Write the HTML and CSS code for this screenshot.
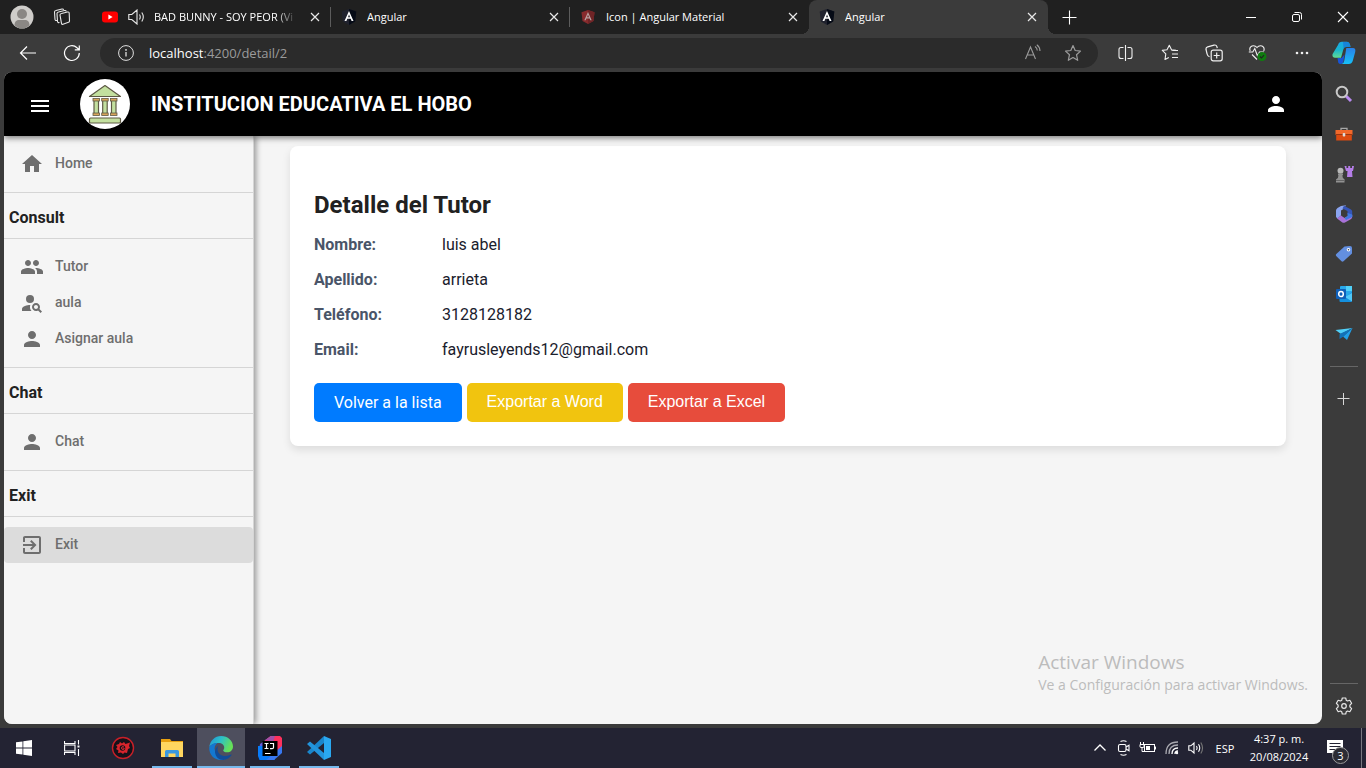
FILE: index.html
```html
<!DOCTYPE html>
<html lang="es">
<head>
<meta charset="utf-8">
<title>Angular</title>
<link rel="stylesheet" href="styles.css">
</head>
<body>
<svg class="defs" aria-hidden="true">
  <symbol id="close" viewBox="0 0 16 16"><path d="M4 4l8 8M12 4l-8 8" fill="none" stroke="#e8e8e8" stroke-width="1.2"/></symbol>
  <symbol id="angular" viewBox="0 0 16 16"><path d="M8 0l7.3 2.6-1.1 10L8 16l-6.200-3.400L.7 2.600z" fill="#20222e"/><path d="M8 0l7.300 2.600-1.100 10L8 16z" fill="#060b16"/><path d="M3.500 12L8 2l4.500 10h-1.900l-.9-2.200H6.300L5.400 12zM7 8.200h2L8 5.600z" fill="#fff"/></symbol>
  <symbol id="person" viewBox="0 0 24 24"><path d="M12 12c2.210 0 4-1.790 4-4s-1.790-4-4-4-4 1.790-4 4 1.790 4 4 4zm0 2c-2.670 0-8 1.340-8 4v2h16v-2c0-2.660-5.330-4-8-4z" fill="currentColor"/></symbol>
</svg>

<header class="tabstrip">
  <div class="profile">
    <button class="icon-btn" aria-label="Perfil"><svg width="24" height="24" viewBox="0 0 24 24"><circle cx="12" cy="12" r="11.500" fill="#cfcdca"/><circle cx="12" cy="9" r="5" fill="#8a8784"/><path d="M4.500 20.500c0-4 2-5.500 4.500-5.500h6c2.500 0 4.500 1.500 4.500 5.500A11 11 0 0 1 4.500 20.500z" fill="#8a8784"/></svg></button>
    <button class="icon-btn" aria-label="Espacios de trabajo"><svg width="18" height="18" viewBox="0 0 18 18" fill="none" stroke="#e8e8e8" stroke-width="1.100"><path d="M8.500 5.500l6-1.500q1.500-.3 1.700 1l.3 8q0 1-1 1.300l-5.500 2q-1.300.4-1.500-1L7 7q0-1.200 1.500-1.500z"/><path d="M6.500 14.500q-1.800.4-2-1L4 5.500q0-1.200 1.500-1.500l6-1.500q1.500-.3 1.800 1M4 12.500q-1.800.3-2-1L1.500 4q0-1.200 1.500-1.500l6-1.500q1.300-.3 1.600.8"/></svg></button>
  </div>
  <nav class="tabs" aria-label="Pestañas">
    <div class="tab">
      <svg width="16" height="16" viewBox="0 0 16 16"><rect x="0" y="2.500" width="16" height="11" rx="3" fill="#f00"/><path d="M6.400 5.600v4.800L10.600 8z" fill="#fff"/></svg>
      <svg class="speaker" width="17" height="16" viewBox="0 0 17 16" fill="none" stroke="#e8e8e8" stroke-width="1.100"><path d="M.8 5.500h3L9 1v14l-5.200-4.500h-3zM11.500 5.500q1.500 2.500 0 5M13.800 3.500q3 4.500 0 9"/></svg>
      <span class="tab-title fade">BAD BUNNY - SOY PEOR (Vi</span>
      <button class="tab-close" aria-label="Cerrar"><svg width="16" height="16"><use href="#close"/></svg></button>
    </div>
    <div class="tab">
      <svg width="16" height="16"><use href="#angular"/></svg>
      <span class="tab-title">Angular</span>
      <button class="tab-close" aria-label="Cerrar"><svg width="16" height="16"><use href="#close"/></svg></button>
    </div>
    <div class="tab no-line">
      <svg width="16" height="16" viewBox="0 0 16 16"><path d="M8 1l6.500 2.300-1 8.700L8 15l-5.500-3-1-8.700z" fill="#872b2d"/><path d="M8 1l6.500 2.300-1 8.700L8 15z" fill="#6f2426"/><path d="M4.300 11.200L8 3l3.700 8.200h-1.400l-.7-1.700H6.400l-.7 1.700zM7 8.200h2L8 5.800z" fill="#b8a0a0"/></svg>
      <span class="tab-title">Icon | Angular Material</span>
      <button class="tab-close" aria-label="Cerrar"><svg width="16" height="16"><use href="#close"/></svg></button>
    </div>
    <div class="tab active">
      <svg width="16" height="16"><use href="#angular"/></svg>
      <span class="tab-title">Angular</span>
      <button class="tab-close" aria-label="Cerrar"><svg width="16" height="16"><use href="#close"/></svg></button>
    </div>
    <button class="icon-btn new-tab" aria-label="Nueva pestaña"><svg width="16" height="16" viewBox="0 0 16 16"><path d="M8.500 1.500v14M1.500 8.500h14" stroke="#fff" stroke-width="1.100"/></svg></button>
  </nav>
  <div class="window-controls">
    <button aria-label="Minimizar"><svg width="12" height="12" viewBox="0 0 12 12"><path d="M1 6.500h10" stroke="#fff"/></svg></button>
    <button aria-label="Restaurar"><svg width="12" height="12" viewBox="0 0 12 12" fill="none" stroke="#fff"><rect x="1.500" y="3.500" width="7" height="7" rx="1.500"/><path d="M3.500 1.500H8.500q2 0 2 2V8.500"/></svg></button>
    <button aria-label="Cerrar ventana"><svg width="12" height="12" viewBox="0 0 12 12"><path d="M1 1l10 10M11 1L1 11" stroke="#fff" stroke-width="1.100"/></svg></button>
  </div>
</header>

<div class="toolbar">
  <button class="nav-btn" aria-label="Atrás"><svg width="18" height="16" viewBox="0 0 18 16" fill="none" stroke="#fff" stroke-width="1.200"><path d="M17 8H1.500M8 1.500L1.500 8 8 14.500"/></svg></button>
  <button class="nav-btn" aria-label="Actualizar"><svg width="18" height="18" viewBox="0 0 18 18" fill="none" stroke="#fff" stroke-width="1.200"><path d="M16.300 9a7.400 7.400 0 1 1-2.300-5.300L16 5.500M16.300 1.500v4.300h-4.500"/></svg></button>
  <div class="address">
    <svg width="16" height="16" viewBox="0 0 16 16" fill="none" stroke="#e0e0e0"><circle cx="8" cy="8" r="7.400"/><path d="M8 7v4.500" stroke-width="1.300"/><circle cx="8" cy="4.900" r=".5" fill="#e0e0e0"/></svg>
    <label class="url-host" for="url">localhost</label><input id="url" class="url" type="text" value=":4200/detail/2" aria-label="Dirección">
    <button class="addr-btn" aria-label="Leer en voz alta"><svg width="18" height="18" viewBox="0 0 18 18" fill="none" stroke="#9b9b9b" stroke-width="1.100"><path d="M1.500 15L6.500 3l5 12M3.200 11h6.600M11 2.500q2.200 1.500 2.300 4M12.800.8q3 2.200 3.200 6.200"/></svg></button>
    <button class="addr-btn" aria-label="Favorito"><svg width="18" height="18" viewBox="0 0 18 18" fill="none" stroke="#9b9b9b" stroke-width="1.200" stroke-linejoin="round"><path d="M9 1.500l2.200 5 5.300.6-4 3.600 1.200 5.600L9 13.500l-4.700 2.800 1.200-5.600-4-3.600 5.300-.6z"/></svg></button>
  </div>
  <div class="tools">
    <button aria-label="Pantalla dividida"><svg width="16" height="18" viewBox="0 0 16 18" fill="none" stroke="#f0f0f0" stroke-width="1.100"><path d="M5.500 3.500H3Q1 3.500 1 5.500v7q0 2 2 2h2.500M9.500 3.500H12q2 0 2 2v7q0 2-2 2H9.500M7.500 1v16"/></svg></button>
    <button aria-label="Favoritos"><svg width="18" height="18" viewBox="0 0 18 18" fill="none" stroke="#f0f0f0" stroke-width="1.100" stroke-linejoin="round"><path d="M15 6.200l-4.500-.5L8.300 1.300 6 5.700l-4.700.7 3.500 3.400L4 15.500l3.800-2M10.500 6.500H17M11 10h6M11 13.500h6"/></svg></button>
    <button aria-label="Colecciones"><svg width="18" height="18" viewBox="0 0 18 18" fill="none" stroke="#f0f0f0" stroke-width="1.200"><rect x="6.200" y="6.200" width="11" height="10.600" rx="2"/><path d="M11.700 8.500v6M8.700 11.500h6M4.500 12.800Q2.500 12 2.100 10L1 5.500Q.7 3.300 2.700 2.800L9 1.100q2.300-.5 2.900 1.500l.4 1.500"/></svg></button>
    <button aria-label="Rendimiento"><svg width="20" height="18" viewBox="0 0 20 18" fill="none" stroke="#f0f0f0" stroke-width="1.100"><path d="M2.200 7Q.8 3.500 4 2q3-1 5 1.500Q11 1 14 2q3 1.500 1.800 5M.8 8h4l2-3.500 2.500 7L11.500 8h4.500M4 10.500l5 5"/><circle cx="14" cy="12.500" r="4.500" fill="#107c10" stroke="none"/><path d="M12 12.500l1.500 1.500 2.500-2.800" stroke="#222"/></svg></button>
    <button aria-label="Más"><svg width="16" height="16" viewBox="0 0 16 16" fill="#f0f0f0"><circle cx="3" cy="8" r="1.300"/><circle cx="8" cy="8" r="1.300"/><circle cx="13" cy="8" r="1.300"/></svg></button>
    <button class="copilot" aria-label="Copilot"><svg width="24" height="24" viewBox="0 0 24 24"><defs><linearGradient id="g1" x1="0" y1="0" x2="0" y2="1"><stop offset="0" stop-color="#19a9e8"/><stop offset=".5" stop-color="#18b4cf"/><stop offset="1" stop-color="#62dd92"/></linearGradient><linearGradient id="g2" x1="0" y1="0" x2="0" y2="1"><stop offset="0" stop-color="#2a80e8"/><stop offset="1" stop-color="#16c0f8"/></linearGradient></defs><path d="M6 4q1-3.200 4-3.200h5q2.500 0 3 2.700L18.500 6H14q-2 0-2.600 2.200L9 16.800H3Q-.2 16.800.6 13z" fill="url(#g1)"/><path d="M11 1h4q2.500 0 3 2.700L18.600 6H14q-1.800 0-2.400 2z" fill="#176fd6" opacity=".65"/><path d="M5.500 17h4l3-3.500-1 6.500q-.5 3-3 3T6 20z" fill="#1754d8"/><path d="M14.300 7H21q3 0 2.200 4l-2.500 9q-1 3-4 3H9.500q2 0 2.700-3z" fill="url(#g2)"/></svg></button>
  </div>
</div>

<div class="middle">
  <main class="page">
    <header class="app-bar">
      <button class="menu-btn drawer" aria-label="Menú"><svg width="24" height="24" viewBox="0 0 24 24"><path d="M3 18h18v-2H3v2zm0-5h18v-2H3v2zm0-7v2h18V6H3z" fill="#fff"/></svg></button>
      <svg class="logo" width="50" height="50" viewBox="0 0 50 50"><circle cx="25" cy="25" r="25" fill="#fff"/><g fill="#c3e09f" stroke="#5e5a45" stroke-width="1.200" stroke-linejoin="round"><path d="M25 6.500L40.500 17.500h-31z"/><rect x="9.500" y="39" width="31" height="5" rx="1"/><rect x="14" y="21" width="4.500" height="14"/><rect x="22.700" y="21" width="4.500" height="14"/><rect x="31.500" y="21" width="4.500" height="14"/></g><g fill="#d9a55b" stroke="#5e5a45" stroke-width=".8"><rect x="13" y="19.500" width="6.500" height="2.500"/><rect x="21.700" y="19.500" width="6.500" height="2.500"/><rect x="30.500" y="19.500" width="6.500" height="2.500"/><rect x="13" y="34" width="6.500" height="2.500"/><rect x="21.700" y="34" width="6.500" height="2.500"/><rect x="30.500" y="34" width="6.500" height="2.500"/></g></svg>
      <h1>INSTITUCION EDUCATIVA EL HOBO</h1>
      <button class="menu-btn account" aria-label="Cuenta"><svg width="24" height="24"><use href="#person"/></svg></button>
    </header>
    <div class="app-body">
      <nav class="sidenav" aria-label="Principal">
        <div class="group"><a href="#home"><svg width="24" height="24" viewBox="0 0 24 24"><path d="M10 20v-6h4v6h5v-8h3L12 3 2 12h3v8z" fill="currentColor"/></svg><span>Home</span></a></div>
        <h2>Consult</h2>
        <div class="group">
          <a href="#tutor"><svg width="24" height="24" viewBox="0 0 24 24"><path fill="currentColor" d="M16 11c1.660 0 2.990-1.340 2.990-3S17.660 5 16 5c-1.660 0-3 1.340-3 3s1.340 3 3 3zm-8 0c1.660 0 2.990-1.340 2.990-3S9.660 5 8 5C6.340 5 5 6.340 5 8s1.340 3 3 3zm0 2c-2.330 0-7 1.170-7 3.500V19h14v-2.500c0-2.330-4.670-3.500-7-3.500zm8 0c-.29 0-.62.020-.97.050 1.160.84 1.970 1.970 1.970 3.450V19h6v-2.500c0-2.330-4.670-3.500-7-3.500z"/></svg><span>Tutor</span></a>
          <a href="#aula"><svg width="24" height="24" viewBox="0 0 24 24"><g fill="currentColor"><circle cx="10" cy="8" r="4"/><path d="M10.350 14.010C7.620 13.910 2 15.270 2 18v2h9.540c-2.470-2.760-1.230-5.890-1.190-5.990zM19.430 18.020c.36-.59.570-1.280.570-2.020 0-2.210-1.790-4-4-4s-4 1.790-4 4 1.790 4 4 4c.74 0 1.430-.22 2.020-.57L20.590 22 22 20.590l-2.570-2.570zM16 18c-1.100 0-2-.9-2-2s.9-2 2-2 2 .9 2 2-.9 2-2 2z"/></g></svg><span>aula</span></a>
          <a href="#asignar"><svg width="24" height="24"><use href="#person"/></svg><span>Asignar aula</span></a>
        </div>
        <h2>Chat</h2>
        <div class="group"><a href="#chat"><svg width="24" height="24"><use href="#person"/></svg><span>Chat</span></a></div>
        <h2>Exit</h2>
        <div class="group"><a class="current" href="#exit"><svg width="24" height="24" viewBox="0 0 24 24"><path fill="currentColor" d="M10.090 15.590L11.500 17l5-5-5-5-1.410 1.410L12.670 11H3v2h9.670l-2.580 2.590zM19 3H5c-1.110 0-2 .9-2 2v4h2V5h14v14H5v-4H3v4c0 1.100.89 2 2 2h14c1.100 0 2-.9 2-2V5c0-1.100-.9-2-2-2z"/></svg><span>Exit</span></a></div>
      </nav>
      <section class="content">
        <article class="card">
          <h2>Detalle del Tutor</h2>
          <dl>
            <div><dt>Nombre:</dt><dd>luis abel</dd></div>
            <div><dt>Apellido:</dt><dd>arrieta</dd></div>
            <div><dt>Teléfono:</dt><dd>3128128182</dd></div>
            <div><dt>Email:</dt><dd>fayrusleyends12@gmail.com</dd></div>
          </dl>
          <div class="actions">
            <a class="btn back" href="#lista">Volver a la lista</a>
            <button class="btn word">Exportar a Word</button>
            <button class="btn excel">Exportar a Excel</button>
          </div>
        </article>
      </section>
    </div>
    <div class="watermark"><p class="wm-title">Activar Windows</p><p class="wm-text">Ve a Configuración para activar Windows.</p></div>
  </main>

  <aside class="edge-bar">
    <button aria-label="Buscar"><svg width="18" height="18" viewBox="0 0 18 18" fill="none"><path d="M11 11l5 5" stroke="#b98af0" stroke-width="3"/><circle cx="7" cy="7" r="5.300" stroke="#c8c8c8" stroke-width="2"/></svg></button>
    <button aria-label="Compras"><svg width="18" height="18" viewBox="0 0 18 18"><path d="M6 5V3.300h6V5" fill="none" stroke="#a8a8a8" stroke-width="1.300"/><path d="M.5 5h17v5h-17z" fill="#f2682a"/><path d="M1.200 10h15.600v5.500H1.200z" fill="#dc4a10"/><path d="M.5 9.500h17" stroke="#9b3610"/><rect x="7.700" y="8" width="2.600" height="3.500" rx="1" fill="#ddd"/></svg></button>
    <button aria-label="Juegos"><svg width="20" height="20" viewBox="0 0 20 20"><path d="M10.500 2h2v2h1.700V2h2v2H18V2h2l-1 5h-1l.5 6h-5.500l.5-6h-1.500z" fill="#b57ee8"/><circle cx="6.500" cy="6.800" r="3" fill="#b8b8b8"/><path d="M4 9.500h5v1.800H8.300q0 3 2.200 4V18.500H2v-3q2.500-1 2.500-4.200H4z" fill="#929292"/><path d="M2 16.500h8.500" stroke="#666"/></svg></button>
    <button aria-label="Microsoft 365"><svg width="18" height="18" viewBox="0 0 18 18"><path d="M6 1l5-.8L8.500 4 6 5.500v5l-3.500 3L1 12V5.500q0-1.500 1.500-2.500z" fill="#8aa4f0"/><path d="M9 .8L16 4.500q1.200.8 1.200 2V12L12.500 9V6L7.500 3.500z" fill="#3655b8"/><path d="M17.200 10v2q0 1.500-1.500 2.300L10 17.500q-1.300.6-2.600 0L2 13.500l4-3 3.500 2.500 5-3z" fill="#a872d8"/><path d="M12.500 8l4.700 1.500V12L11 15l-1.500-2 3-2z" fill="#4078e0"/></svg></button>
    <button aria-label="Compras y ofertas"><svg width="18" height="18" viewBox="0 0 18 18"><path d="M9.500 1.500L15 1q2 0 2 2v5.500L8.500 16.300q-1 .9-2 0L1.200 11q-.8-1 .1-2z" fill="#638fe0"/><circle cx="13.500" cy="4.700" r="1.800" fill="#fff"/><circle cx="13.500" cy="4.700" r=".8" fill="#345"/></svg></button>
    <button aria-label="Outlook"><svg width="18" height="18" viewBox="0 0 18 18"><rect x="5" y="1" width="12" height="12" rx="1" fill="#28a8ea"/><path d="M11 1h6v5h-6z" fill="#50d0f8"/><path d="M17 7v9q0 1-1 1H5.500q-1 0-1-1V10l6.500 2z" fill="#1490df"/><path d="M17 8v8.500l-7-4.500z" fill="#50c8f8"/><rect x="1" y="4" width="10" height="10" rx="1" fill="#0f5fb8"/><ellipse cx="6" cy="9" rx="2.300" ry="2.600" fill="none" stroke="#fff" stroke-width="1.500"/></svg></button>
    <button aria-label="Drop"><svg width="18" height="18" viewBox="0 0 18 18"><path d="M.5 5L17.500 3 6 9z" fill="#50d0f8"/><path d="M17.500 3L12 15 8 11.500z" fill="#22a0e8"/><path d="M17.500 3L4.500 9v5l4-2.500z" fill="#1272b8"/></svg></button>
    <hr>
    <button class="add" aria-label="Personalizar"><svg width="14" height="14" viewBox="0 0 14 14"><path d="M6.500 1v12M.5 6.500h12" stroke="#d8d8d8"/></svg></button>
    <hr class="bottom">
    <button class="settings" aria-label="Configuración"><svg width="18" height="18" viewBox="0 0 18 18" fill="none" stroke="#e8e8e8" stroke-width="1.200" stroke-linejoin="round"><path d="M7.300 1h3.400l.6 2.300 1.200.7 2.300-.7 1.800 3-1.700 1.800v1.800l1.700 1.800-1.800 3-2.300-.7-1.200.7-.6 2.300H7.300l-.6-2.300-1.200-.7-2.300.7-1.800-3 1.700-1.800V8.100L1.400 6.300l1.800-3 2.300.7 1.200-.7z"/><circle cx="9" cy="9" r="2.300"/></svg></button>
  </aside>
</div>

<footer class="taskbar">
  <div class="system">
    <button aria-label="Inicio"><svg width="16" height="16" viewBox="0 0 16 16" fill="#fff"><path d="M0 2.300L6.500 1.400v6.200H0zM7.300 1.300L16 0v7.600H7.300zM0 8.400h6.500v6.200L0 13.700zM7.300 8.400H16V16l-8.700-1.300z"/></svg></button>
    <button aria-label="Vista de tareas"><svg width="16" height="16" viewBox="0 0 16 16" fill="none" stroke="#fff" stroke-width="1.100"><path d="M.5 1v2.500h10.500V1M.5 15v-2.500h10.500V15M14.500 0v4.500M14.500 9v7"/><rect x=".6" y="5" width="10.400" height="6"/><rect x="13.500" y="5.500" width="2" height="2" fill="#fff" stroke="none"/></svg></button>
  </div>
  <div class="apps">
    <button aria-label="Panel"><svg width="24" height="24" viewBox="0 0 24 24"><circle cx="12" cy="12" r="10.500" fill="#15121a" stroke="#c82028" stroke-width="1.400"/><path d="M5 9l3-1 1-2 2 1.500L13 6l1.500 2L19 6.500 18 10l1 2-2 1-1 4-2.500-.5L12 18l-2-1.500-3 .5.500-2.500L5 13l1.500-2z" fill="#d8242c"/><circle cx="11.500" cy="12" r="2.800" fill="#15121a"/><path d="M13 11q-2.500-1-2.500 1t2.500 1.200V12" fill="none" stroke="#e83038"/></svg></button>
    <button class="open" aria-label="Explorador de archivos"><svg width="22" height="20" viewBox="0 0 22 20"><path d="M0 1h9l1.500 2H22v4H0z" fill="#e8a010"/><path d="M0 4h22v15H0z" fill="#ffd660"/><path d="M4 19v-5.500q0-1.500 1.500-1.500h11q1.500 0 1.500 1.500V19h-3.500v-3.500h-7V19z" fill="#3a98e0"/></svg></button>
    <button class="open selected" aria-label="Microsoft Edge"><svg width="24" height="24" viewBox="0 0 24 24"><defs><linearGradient id="e1" x1="0" y1="0" x2="1" y2=".4"><stop offset="0" stop-color="#2090d8"/><stop offset=".5" stop-color="#2cc0c8"/><stop offset="1" stop-color="#66e058"/></linearGradient></defs><path d="M.2 11.500C1 4.500 6 0 12 0c7 0 12 5 12 10.500 0 3.500-2.600 5.800-5.800 5.800-2.500 0-4-1-4-1.800 0-.7 1-1.200 1-3 0-2.500-2.300-4.500-5.500-4.500C5 7 1 9 .2 11.500z" fill="url(#e1)"/><path d="M.2 11.500C1.500 8.500 5 6.800 8.500 7 6 8.500 5 11.500 6 15c1.200 5 6 8 10 8-1 .7-2.500 1-4 1C5 24 0 18.500.2 11.500z" fill="#1478d0"/><path d="M9.500 9.500C7 13 9 19.500 15.500 20c3.500.2 6-1.500 6.800-1.500.5 0 .3.600 0 1C20 22.500 16.500 24.500 12.500 23.800 6 22.500 3.500 14 9.500 9.500z" fill="#124c98"/></svg></button>
    <button class="open" aria-label="IntelliJ IDEA"><svg width="24" height="24" viewBox="0 0 24 24"><path d="M2 8L13 0 8 12 4 20H0z" fill="#6858d8"/><path d="M0 10h8l9 14H1.500L0 20z" fill="#087cfa"/><path d="M6 5.500L12.500 0H22l2 2v10l-8 6z" fill="#fe315d"/><path d="M24 10v7l-8 7H8l8-7z" fill="#3878f0"/><path d="M7 4l6-4h4l-2 6z" fill="#a050a8"/><rect x="4.500" y="5" width="15" height="15" fill="#000"/><path d="M6.500 7.500h4M8.500 7.500v5M6.500 12.500h4M12 7.500h3.500v4q0 1.200-1.300 1.200H12M7 17.500h5.500" stroke="#fff" stroke-width="1.200" fill="none"/></svg></button>
    <button class="open" aria-label="Visual Studio Code"><svg width="24" height="24" viewBox="0 0 24 24"><path d="M17 0v7L3 18.500 0 16z" fill="#1a86cc"/><path d="M17 24v-7L3 5.500 0 8z" fill="#2294dc"/><path d="M17 0l7 3v18l-7 3z" fill="#2aa8f0"/></svg></button>
  </div>
  <div class="tray">
    <button aria-label="Iconos ocultos"><svg width="14" height="16" viewBox="0 0 14 16" fill="none" stroke="#fff" stroke-width="1.300"><path d="M1.500 10.500L7 5l5.500 5.500"/></svg></button>
    <button aria-label="Reunión"><svg width="14" height="16" viewBox="0 0 14 16" fill="none" stroke="#fff" stroke-width="1.100"><rect x="1.500" y="4.500" width="7.500" height="7" rx="1.500"/><path d="M9 7l3-1.800v5.600L9 9M3.500 1.500Q6.500 0 9.500 1.500M3.500 14.500q3 1.500 6 0"/></svg></button>
    <button aria-label="Batería"><svg width="18" height="16" viewBox="0 0 18 16" fill="none" stroke="#fff"><rect x="5.500" y="4.500" width="10" height="7"/><rect x="7" y="6" width="4" height="4" fill="#fff" stroke="none"/><path d="M16.500 6.500v3M1.500 2v2.500M4.500 2v2.500M1 4.500h4v2q0 1-1 1H2q-1 0-1-1zM3 7.500v4h2.500"/></svg></button>
    <button aria-label="Red"><svg width="16" height="16" viewBox="0 0 16 16" fill="none" stroke="#a9a9b0" stroke-width="1.300"><path d="M2 14Q2 2 14 2M5 14Q5 5 14 5"/><path d="M8 14q0-6 6-6M11 14q0-3 3-3" stroke="#fff"/><circle cx="13" cy="13" r="1.200" fill="#fff" stroke="none"/></svg></button>
    <button aria-label="Volumen"><svg width="16" height="16" viewBox="0 0 16 16" fill="none" stroke="#fff" stroke-width="1.100"><path d="M.8 5.800h2L6 3v10l-3.200-2.800h-2zM8.500 6q1.300 2 0 4M10.500 4.300q2.500 3.700 0 7.400"/><path d="M12.800 2.500q3.500 5.500 0 11" stroke="#777"/></svg></button>
    <button class="lang">ESP</button>
    <button class="clock"><span>4:37 p. m.</span><span>20/08/2024</span></button>
    <button class="notify" aria-label="Notificaciones"><svg width="26" height="26" viewBox="0 0 26 26"><path d="M1 3h16v13H10l-3.500 3.500V16H1z" fill="#fff"/><path d="M3.500 6.500h11M3.500 9.500h11M3.500 12.500h7" stroke="#232333"/></svg><span class="badge">3</span></button>
  </div>
</footer>
</body>
</html>
```
FILE: styles.css
```css
* { box-sizing: border-box; }
body {
  margin: 0;
  height: 100vh;
  display: flex;
  flex-direction: column;
  overflow: hidden;
  background: #3b3b3b;
  font-family: "Open Sans", "Noto Sans", sans-serif;
  font-size: 11px;
  color: #fff;
}
button {
  border: 0;
  padding: 0;
  background: none;
  color: inherit;
  font: inherit;
  display: flex;
  align-items: center;
  justify-content: center;
}
a { text-decoration: none; color: inherit; }
h1, h2, p, dl, dd { margin: 0; }
svg { flex: none; display: block; }
.defs { position: absolute; width: 0; height: 0; }

/* Tab strip */
.tabstrip { display: flex; height: 34px; background: #202020; flex: none; }
.profile { display: flex; padding-left: 2px; width: 92px; }
.icon-btn { width: 40px; height: 34px; }
.tabs { display: flex; flex: 1; min-width: 0; }
.tab {
  flex: 0 1 239px;
  min-width: 0;
  display: flex;
  align-items: center;
  gap: 10px;
  padding: 0 8px 0 10px;
  background: linear-gradient(#5c5c5c, #5c5c5c) right center / 1px 20px no-repeat;
}
.tab.no-line { background: none; }
.tab.active { position: relative; background: #3b3b3b; border-radius: 8px 8px 0 0; }
.tab.active::before,
.tab.active::after {
  content: "";
  position: absolute;
  bottom: 0;
  width: 8px;
  height: 8px;
}
.tab.active::before { right: 100%; background: radial-gradient(circle at 0 0, transparent 8px, #3b3b3b 8px); }
.tab.active::after { left: 100%; background: radial-gradient(circle at 100% 0, transparent 8px, #3b3b3b 8px); }
.new-tab { margin-left: 1px; }
.speaker { margin-right: -1px; }
.tab-title { flex: 1; min-width: 0; white-space: nowrap; overflow: hidden; line-height: 20px; }
.fade { mask-image: linear-gradient(to right, #000 85%, transparent); }
.tab-close { width: 16px; height: 16px; }
.window-controls { display: flex; }
.window-controls button { width: 46px; }

/* Toolbar */
.toolbar { display: flex; align-items: center; height: 38px; padding-left: 6px; flex: none; }
.nav-btn { width: 44px; height: 30px; }
.address {
  flex: 1;
  min-width: 0;
  height: 30px;
  margin: 0 6px;
  padding: 0 5px 0 18px;
  display: flex;
  align-items: center;
  border-radius: 15px;
  background: #2b2b2b;
  font-size: 13px;
}
.url-host { margin-left: 15px; }
.url {
  flex: 1;
  min-width: 0;
  border: 0;
  padding: 0;
  outline: 0;
  background: none;
  color: #9b9b9b;
  font: inherit;
}
.addr-btn { width: 40px; height: 30px; }
.tools { display: flex; }
.tools button { width: 44px; height: 38px; }
.tools .copilot { width: 42px; padding-right: 2px; }

/* Web page viewport */
.middle { flex: 1; min-height: 0; display: flex; padding: 0 0 4px 4px; }
.page {
  position: relative;
  flex: 1;
  min-width: 0;
  display: flex;
  flex-direction: column;
  border-radius: 8px;
  overflow: hidden;
  background: #f5f5f5;
  font-family: Roboto, sans-serif;
  color: #212121;
}
.app-bar {
  z-index: 1;
  display: flex;
  align-items: center;
  height: 64px;
  flex: none;
  padding: 0 22px 0 12px;
  background: #000;
  color: #fff;
  box-shadow: 0 2px 6px rgba(0, 0, 0, .5);
}
.menu-btn { width: 48px; height: 48px; }
.drawer { padding-top: 4px; }
.logo { margin: 0 21px 0 16px; }
.app-bar h1 { flex: 1; font-size: 20px; line-height: 32px; font-weight: 700; }
.app-body { flex: 1; min-height: 0; display: flex; }

.sidenav {
  width: 250px;
  flex: none;
  border-right: 1px solid #d5d5d5;
  box-shadow: 2px 0 6px rgba(0, 0, 0, .4);
  background: #f5f5f5;
}
.sidenav h2 {
  padding-left: 5px;
  border: solid #d5d5d5;
  border-width: 1px 0;
  font-size: 16px;
  line-height: 49px;
  height: 47px;
  font-weight: 700;
}
.group { padding: 10px 0; }
.group a {
  display: flex;
  align-items: center;
  gap: 11px;
  height: 36px;
  padding-left: 16px;
  border-radius: 4px;
  font-size: 14px;
  line-height: 20px;
  font-weight: 500;
  color: #6e6e6e;
}
.group a span { padding-bottom: 2px; }
.group a.current { background: #dcdcdc; }

.content { flex: 1; min-width: 0; padding: 10px 36px; }
.card {
  padding: 44px 24px 24px;
  border-radius: 8px;
  background: #fff;
  box-shadow: 0 4px 8px rgba(0, 0, 0, .1);
}
.card h2 { font-size: 24px; line-height: 30px; font-weight: 700; }
.card dl { display: grid; gap: 11px; margin: 13px 0 21px; font-size: 16px; line-height: 24px; }
.card dl div { display: flex; }
.card dt { width: 128px; font-weight: 700; color: #4a5568; }
.card dd { color: #1a202c; }
.actions { display: flex; gap: 5px; }
.btn {
  padding: 0 20px;
  border-radius: 5px;
  font-size: 16px;
  line-height: 39px;
  color: #fff;
}
.word, .excel { height: 39px; line-height: 37px; padding-bottom: 2px; font-family: "Liberation Sans", Arial, sans-serif; }
.back { background: #007bff; }
.word { background: #f1c40f; }
.excel { background: #e74c3c; }

.watermark {
  position: absolute;
  right: 14px;
  bottom: 28px;
  font-family: "Open Sans", "Noto Sans", sans-serif;
  color: #bcbcbc;
  white-space: nowrap;
}
.wm-title { font-size: 19px; line-height: 24px; }
.wm-text { font-size: 14px; line-height: 22px; }

/* Browser side bar */
.edge-bar { width: 44px; flex: none; display: flex; flex-direction: column; align-items: center; padding-top: 2px; }
.edge-bar button { width: 40px; height: 40px; flex: none; }
.edge-bar hr { width: 28px; height: 1px; margin: 12px 0; border: 0; background: #666; flex: none; }
.edge-bar hr.bottom { margin: auto 0 4px; }
.edge-bar .settings { height: 36px; }

/* Taskbar */
.taskbar { height: 40px; flex: none; display: flex; background: #232333; }
.system { display: flex; }
.system button { width: 48px; }
.apps { display: flex; gap: 1px; margin-left: 3px; }
.apps button { width: 48px; }
.apps .open { background: linear-gradient(#76b9ed, #76b9ed) center bottom / 40px 2px no-repeat; }
.apps .selected { background: linear-gradient(#76b9ed, #76b9ed) center bottom / 48px 2px no-repeat #4e4f5e; }
.tray { display: flex; margin-left: auto; padding-right: 4px; }
.tray button { width: 24px; }
.tray .lang { width: 34px; }
.tray .clock { width: 74px; flex-direction: column; line-height: 18px; }
.tray .notify {
  position: relative;
  width: 46px;
  padding-top: 4px;
  border-right: 1px solid #77777f;
}
.badge {
  position: absolute;
  left: 16px;
  top: 19px;
  width: 17px;
  height: 17px;
  border: 1px solid #999;
  border-radius: 50%;
  background: #2c2c34;
  line-height: 15px;
  text-align: center;
}
```
